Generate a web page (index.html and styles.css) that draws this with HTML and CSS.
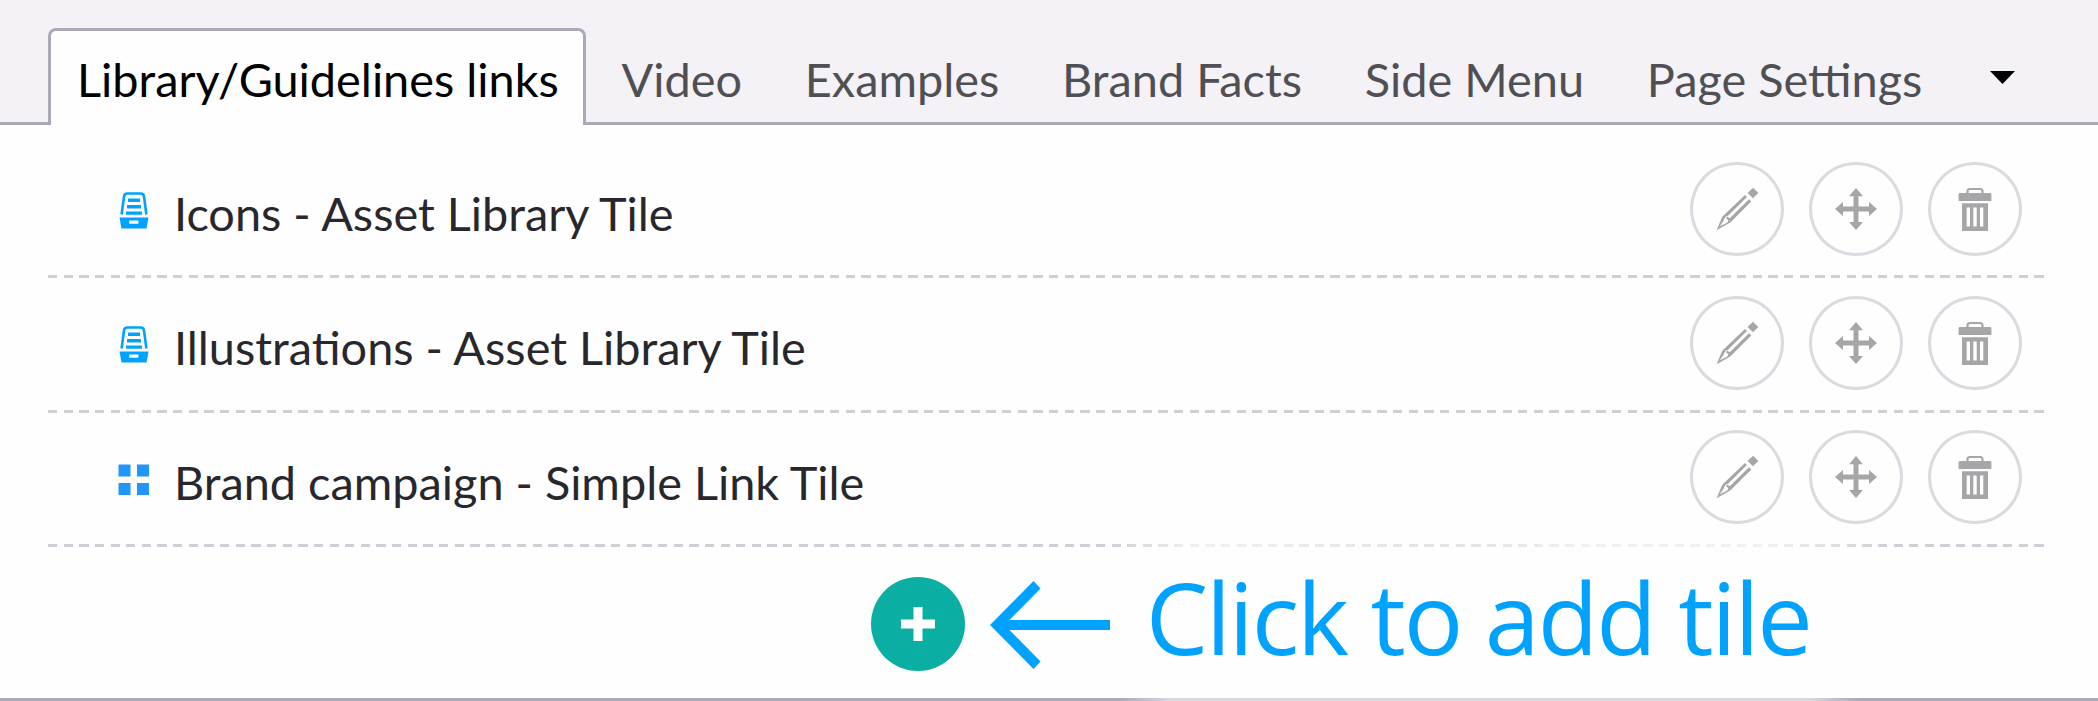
FILE: index.html
```html
<!DOCTYPE html>
<html lang="en">
<head>
<meta charset="utf-8">
<title>Library/Guidelines links</title>
<link rel="stylesheet" href="styles.css">
</head>
<body>
<svg class="defs" width="0" height="0" aria-hidden="true">
  <symbol id="drawer" viewBox="0 0 30 38">
    <path d="M2.6 22.5L5 4.5Q5.400 1.500 8.400 1.500H21.600Q24.600 1.500 25 4.500L27.400 22.500" fill="none" stroke="currentColor" stroke-width="2.600"/>
    <path d="M9 6.500H21V10H9zM8 13H22V16.500H8zM7 19.500H23V22.800H7z"/>
    <path fill-rule="evenodd" d="M.5 25.500H29.500L27.500 36.500H2.500zM10.200 28.500V31.700H19.400V28.500z"/>
  </symbol>
  <symbol id="grid" viewBox="0 0 32 32">
    <path d="M.5 .5H12.500V12.500H.5zM19 .5H31V12.500H19zM.5 19H12.500V31H.5zM19 19H31V31H19z"/>
  </symbol>
  <symbol id="pencil" viewBox="0 0 44 44">
    <path d="M38 .8L43.400 6L38 11.200L32.600 6z"/>
    <path d="M30 8L32 10L13 28.800Q9.500 29.500 8.500 34L4.200 40L1.600 43.200L6.500 31.500Q7 30 8.500 28.600z"/>
    <path d="M33.300 11.500L36.300 14.500L17.800 33Q16 35 13.500 36.500L1.600 43.200L4.200 39.500L11.500 36Q13.500 35 14 31z"/>
    <path d="M32.500 10.800L34 12.300L14.500 31.500L12.800 31.300L12.900 29.800z" fill="#fefefe"/>
    <path d="M12.500 29.500L15.500 32.200L13.800 33.800L11 31z"/>
  </symbol>
  <symbol id="move" viewBox="0 0 44 44">
    <path d="M22 1L29 9.200H24.500V19.500H35V15L43 22L35 29V24.500H24.500V35H29L22 43L15 35H19.500V24.500H9V29L1 22L9 15V19.500H19.500V9.200H15z"/>
  </symbol>
  <symbol id="trash" viewBox="0 0 34 44">
    <path d="M9.500 7V4.500Q9.500 2 12 2H22Q24.500 2 24.500 4.500V7" fill="none" stroke="currentColor" stroke-width="2.200"/>
    <path d="M2 6H32Q33.400 6 33.400 7.400V14H.6V7.400Q.6 6 2 6z"/>
    <path fill-rule="evenodd" d="M4 16.200H30V44H4zM8.700 20.500V39.500H12V20.500zM15.300 20.500V39.500H18.700V20.500zM22 20.500V39.500H25.300V20.500z"/>
  </symbol>
</svg>

<nav class="tabs">
  <a class="tab tab-active">Library/Guidelines links</a>
  <a class="tab">Video</a>
  <a class="tab">Examples</a>
  <a class="tab">Brand Facts</a>
  <a class="tab">Side Menu</a>
  <a class="tab">Page Settings</a>
  <svg class="caret" viewBox="0 0 25 13"><path d="M0 0H25L12.500 13z"/></svg>
</nav>

<main class="panel">
  <div class="row">
    <svg class="kind"><use href="#drawer"/></svg>
    <span class="name">Icons - Asset Library Tile</span>
    <button class="action"><svg class="i-pencil"><use href="#pencil"/></svg></button>
    <button class="action"><svg class="i-move"><use href="#move"/></svg></button>
    <button class="action"><svg class="i-trash"><use href="#trash"/></svg></button>
  </div>
  <div class="row">
    <svg class="kind"><use href="#drawer"/></svg>
    <span class="name">Illustrations - Asset Library Tile</span>
    <button class="action"><svg class="i-pencil"><use href="#pencil"/></svg></button>
    <button class="action"><svg class="i-move"><use href="#move"/></svg></button>
    <button class="action"><svg class="i-trash"><use href="#trash"/></svg></button>
  </div>
  <div class="row row-faded">
    <svg class="kind kind-grid"><use href="#grid"/></svg>
    <span class="name">Brand campaign - Simple Link Tile</span>
    <button class="action"><svg class="i-pencil"><use href="#pencil"/></svg></button>
    <button class="action"><svg class="i-move"><use href="#move"/></svg></button>
    <button class="action"><svg class="i-trash"><use href="#trash"/></svg></button>
  </div>
  <div class="add-row">
    <button class="add"><svg viewBox="0 0 34 34"><path d="M12.500 0H21.500V12.500H34V21.500H21.500V34H12.500V21.500H0V12.500H12.500z"/></svg></button>
    <svg class="arrow" viewBox="0 0 120 88"><path d="M0 44L43.500 0L50.500 7.500L19.500 39H120V49H19.500L50.500 80.500L43.500 88z"/></svg>
    <span class="hint">Click to add tile</span>
  </div>
</main>
</body>
</html>
```
FILE: styles.css
```css
* { box-sizing: border-box; }
body {
  margin: 0;
  height: 701px;
  overflow: hidden;
  background: #fefefe;
  font-family: Lato, sans-serif;
  font-size: 46.850px;
  color: #28282c;
  display: flex;
  flex-direction: column;
}
.defs { display: none; }

.tabs {
  height: 125px;
  padding: 28px 0 0 48px;
  display: flex;
  background: linear-gradient(#aba9b9, #aba9b9) 0 100% / 100% 3px no-repeat #f4f2f6;
}
.tab {
  height: 97px;
  padding: 0 31.400px;
  line-height: 102px;
  color: #505054;
  white-space: nowrap;
}
.tab-active {
  width: 538px;
  padding: 0 0 0 26px;
  line-height: 96px;
  color: #000;
  background: #fefefe;
  border: 3px solid #aba9b9;
  border-width: 3px 3px 0;
  border-radius: 8px 8px 0 0;
}
.tab-active + .tab { padding-left: 35.500px; }
.caret { width: 25px; height: 13px; margin: 43px 0 0 36px; }

.panel {
  flex: 1;
  display: flex;
  flex-direction: column;
  padding: 19px 54px 0 48px;
  background:
    linear-gradient(90deg, #aba9b9 1120px, #d9d7e0 1170px, #d9d7e0 1810px, #aba9b9 1860px) 0 100% / 100% 3px no-repeat;
}
.row {
  --dash: #cfced6;
  height: 134.300px;
  padding: 0 22.500px 5px 71px;
  display: flex;
  align-items: center;
  gap: 25px;
  background: repeating-linear-gradient(90deg, var(--dash) 0 9.300px, transparent 9.300px 15.640px) 0 100% / 100% 3px no-repeat;
}
.row-faded {
  background:
    linear-gradient(90deg, transparent 1060px, #fefefeb8 1150px, #fefefe70 1370px, #fefefe70 1430px, #fefefeb8 1540px, #fefefeb8 1720px, transparent 1840px) 0 100% / 100% 3px no-repeat,
    repeating-linear-gradient(90deg, var(--dash) 0 9.300px, transparent 9.300px 15.640px) 0 100% / 100% 3px no-repeat;
}
.kind { width: 30px; height: 38px; margin-top: 5px; fill: currentColor; color: #00a2ff; }
.kind-grid { width: 32px; height: 32px; margin: 5px -1px 0 -1px; color: #2196f8; }
.name { flex: 1; line-height: 60px; padding-top: 9px; white-space: nowrap; }
.action {
  flex: none;
  width: 93.700px;
  height: 94px;
  padding: 0;
  border: 3px solid #dbdae0;
  border-radius: 50%;
  background: #fefefe;
  color: #a6a6a8;
  display: flex;
  align-items: center;
  justify-content: center;
}
.action svg { width: 44px; height: 44px; fill: currentColor; }
.action .i-trash { width: 34px; }

.add-row {
  height: 154px;
  padding-left: 822.700px;
  display: flex;
  align-items: center;
}
.add {
  width: 94px;
  height: 94px;
  padding: 0;
  border: 0;
  border-radius: 50%;
  background: #0aaea2;
  display: flex;
  align-items: center;
  justify-content: center;
}
.add svg { width: 34px; height: 34px; fill: #fff; }
.arrow { width: 120px; height: 88px; margin: 2px 0 0 25px; fill: #00a2ff; }
.hint {
  margin-left: 36px;
  padding-bottom: 13px;
  font: 99px/120px "Open Sans", sans-serif;
  letter-spacing: -2.100px;
  color: #00a2ff;
  white-space: nowrap;
}
```
